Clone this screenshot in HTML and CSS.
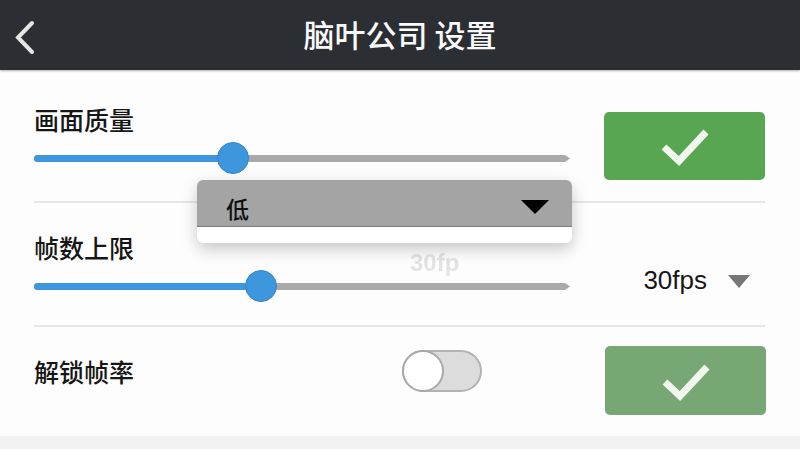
FILE: index.html
```html
<!DOCTYPE html>
<html>
	<head>
		<meta charset="UTF-8">
		<title>脑叶公司 设置</title>
		<link rel="stylesheet" href="styles.css">
	</head>
	<body>
		<div id="header">
			<svg class="back" width="40" height="40" viewBox="0 0 40 40">
				<polyline points="17,5 3,19.5 17,34" />
			</svg>
			<div class="title">脑叶公司 设置</div>
		</div>

		<div id="settings">
			<div class="row row-quality">
				<div class="control">
					<div class="label">画面质量</div>
					<div class="slider">
						<div class="track"></div>
						<div class="fill" style="width: 199px"></div>
						<div class="thumb" style="left: 183px"></div>
					</div>
				</div>
				<div class="confirm">
					<svg width="50" height="40" viewBox="0 0 50 40"><polyline points="4,21 19,35 46,6" /></svg>
				</div>
			</div>

			<div class="row row-fps">
				<div class="control">
					<div class="label">帧数上限</div>
					<div class="slider">
						<div class="track"></div>
						<div class="fill" style="width: 227px"></div>
						<div class="thumb" style="left: 211px"></div>
					</div>
				</div>
				<div class="fps">
					<span>30fps</span>
					<span class="caret"></span>
				</div>
				<div class="ghost">30fp</div>
			</div>

			<div class="row row-unlock">
				<div class="label wide">解锁帧率</div>
				<div class="toggle"><div class="knob"></div></div>
				<div class="confirm muted">
					<svg width="50" height="40" viewBox="0 0 50 40"><polyline points="4,21 19,35 46,6" /></svg>
				</div>
			</div>

			<!-- quality picker, open over the rows -->
			<div class="dropdown">
				<div class="current">
					<span>低</span>
					<span class="arrow"></span>
				</div>
				<div class="list"></div>
			</div>
		</div>
		<div id="bottom"></div>
	</body>
</html>
```

FILE: styles.css
```css
body {
	margin: 0;
	width: 800px;
	height: 450px;
	overflow: hidden;
	background-color: #fdfdfd;
	font-family: "Noto Sans CJK SC", "Noto Sans", sans-serif;
	color: #161616;
}
#header {
	height: 70px;
	background-color: #2b2e33;
	display: flex;
	align-items: center;
	justify-content: center;
	position: relative;
	box-shadow: 0 1px 2px rgba(0, 0, 0, 0.3);
}
#header .back {
	position: absolute;
	left: 15px;
	top: 18px;
}
.back polyline {
	fill: none;
	stroke: #e6e6e6;
	stroke-width: 4;
	stroke-linecap: round;
	stroke-linejoin: miter;
}
.title {
	color: #fafafa;
	font-size: 31px;
	font-weight: 500;
	line-height: 40px;
	margin-top: -2px;
}
#settings {
	position: relative;
	margin: 0 35px 0 34px;
}
.row {
	display: flex;
	align-items: flex-start;
	border-bottom: 2px solid #e6e6e6;
	position: relative;
}
.control {
	width: 536px;
}
.label {
	font-size: 25px;
	font-weight: 500;
	line-height: 30px;
}
.label.wide {
	width: 368px;
	margin-top: 10px;
}
.slider {
	position: relative;
	height: 32px;
}
.track {
	position: absolute;
	left: 0;
	right: 0;
	top: 13px;
	height: 7px;
	background-color: #a9a9a9;
	border-radius: 4px 0 0 4px;
	clip-path: polygon(0 0, calc(100% - 5px) 0, 100% 50%, calc(100% - 5px) 100%, 0 100%);
}
.fill {
	position: absolute;
	left: 0;
	top: 13px;
	height: 7px;
	background-color: #3d97df;
	border-radius: 4px;
}
.thumb {
	position: absolute;
	top: 0;
	width: 30px;
	height: 30px;
	border-radius: 50%;
	background-color: #3e96dd;
	border: 1px solid #3584c6;
}
.confirm {
	width: 161px;
	height: 68px;
	margin-left: auto;
	border-radius: 5px;
	background-color: #58a651;
	display: flex;
	align-items: center;
	justify-content: center;
}
.confirm.muted {
	background-color: #77a873;
	height: 69px;
	margin-right: -1px;
}
.confirm polyline {
	fill: none;
	stroke: #f1f6ef;
	stroke-width: 7;
}

.row-quality {
	height: 133px;
	box-sizing: border-box;
	padding-top: 34px;
}
.row-quality .slider {
	margin-top: 8px;
}
.row-quality .confirm {
	margin-top: 8px;
}

.row-fps {
	height: 124px;
	box-sizing: border-box;
	padding-top: 29px;
}
.row-fps .slider {
	margin-top: 8px;
}
.fps {
	margin-left: auto;
	margin-right: 15px;
	margin-top: 33px;
	display: flex;
	align-items: center;
	font-family: "Liberation Sans", sans-serif;
	font-size: 26px;
	line-height: 30px;
}
.caret {
	margin-left: 21px;
	width: 0;
	height: 0;
	border-left: 11px solid transparent;
	border-right: 11px solid transparent;
	border-top: 13px solid #777;
	margin-top: 2px;
}
.ghost {
	position: absolute;
	left: 376px;
	top: 46px;
	font-family: "Liberation Sans", sans-serif;
	font-weight: bold;
	font-size: 24px;
	color: #e3e3e3;
	filter: blur(0.6px);
}

.row-unlock {
	height: 109px;
	box-sizing: border-box;
	padding-top: 19px;
	border-bottom: 0;
}
.toggle {
	width: 76px;
	height: 38px;
	margin-top: 4px;
	border: 2px solid #b3b3b3;
	border-radius: 21px;
	background-color: #dcdcdc;
	position: relative;
}
.knob {
	position: absolute;
	left: -2px;
	top: -2px;
	width: 38px;
	height: 38px;
	border-radius: 50%;
	background-color: #fff;
	border: 2px solid #a9a9a9;
}

.dropdown {
	position: absolute;
	left: 163px;
	top: 110px;
	width: 375px;
	border-radius: 6px;
	overflow: hidden;
	background-color: #fff;
	box-shadow: 0 6px 16px rgba(0, 0, 0, 0.22);
}
.current {
	height: 47px;
	box-sizing: border-box;
	padding: 10px 23px 0 29px;
	background-color: #a4a4a4;
	border-bottom: 1px solid #7d7d7d;
	display: flex;
	align-items: center;
	font-size: 23px;
	font-weight: 500;
	color: #111;
}
.arrow {
	margin-left: auto;
	width: 0;
	height: 0;
	border-left: 14px solid transparent;
	border-right: 14px solid transparent;
	border-top: 14px solid #000;
	margin-top: -2px;
}
.list {
	height: 16px;
}
#bottom {
	height: 13px;
	background-color: #f2f2f2;
}
```
